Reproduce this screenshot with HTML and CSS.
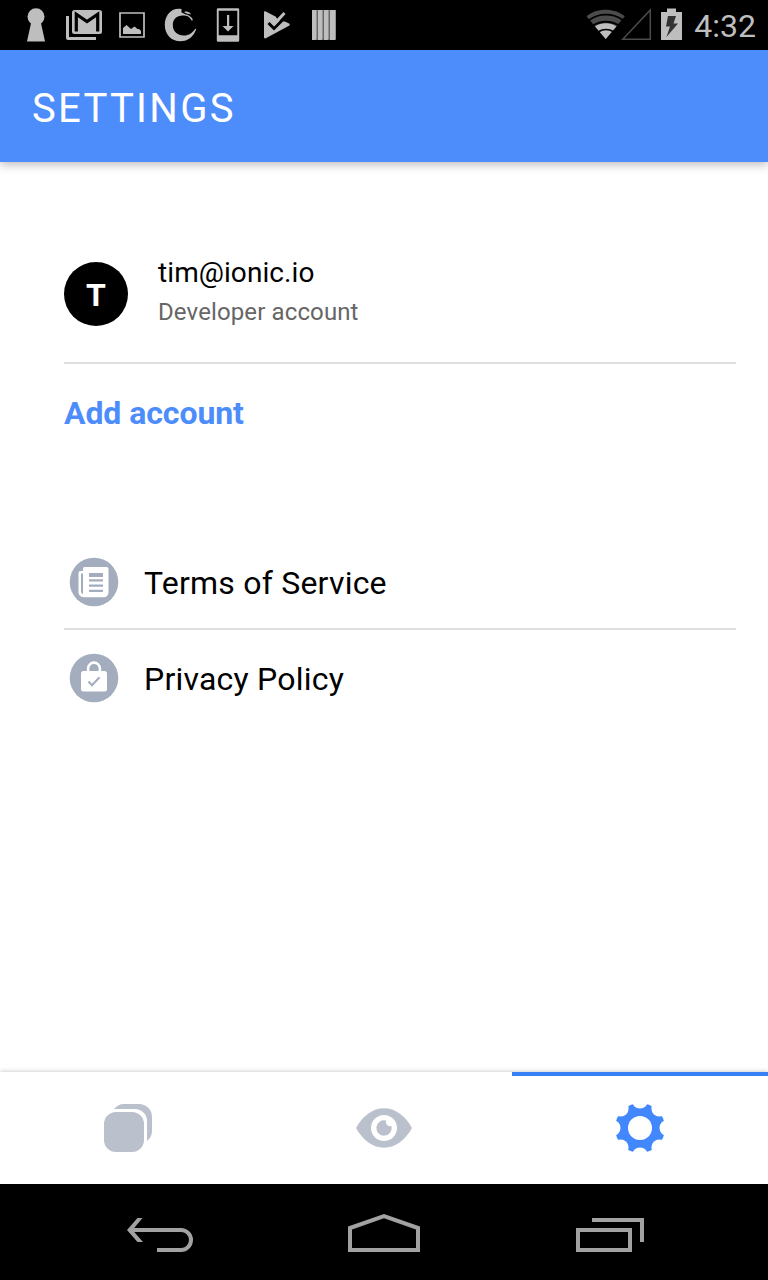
FILE: index.html
```
<!DOCTYPE html>
<html lang="en">

<head>
    <meta charset="UTF-8">
    <meta name="viewport" content="width=device-width, initial-scale=1.0">
    <title>Settings</title>
    <link rel="stylesheet" href="styles.css">
</head>

<body>
    <div class="status-bar">
        <div class="notifications">
            <!-- keyhole -->
            <svg width="48" height="50" viewBox="0 0 48 50"><circle cx="24" cy="16.7" r="8.5"/><path d="M19.500 21h9l4.500 20.500H15z"/></svg>
            <!-- mail -->
            <svg width="48" height="50" viewBox="0 0 48 50">
                <path d="M6 16h3v21h27v3H8a2 2 0 0 1-2-2z"/>
                <rect x="12" y="10" width="30" height="24" rx="2.500"/>
                <path class="cut" d="M16.300 31.500V14.200L27 21.600l10.700-7.400v17.300" stroke-width="3.200"/>
            </svg>
            <!-- picture -->
            <svg width="48" height="50" viewBox="0 0 48 50"><path class="line" d="M12 13h24v24H12z" stroke-width="1.700"/><path d="M15 34v-6l3.500-3 4.500 4 3.500-2.500 3 2.500h1.500l2 2v3z"/></svg>
            <!-- swirl -->
            <svg width="48" height="50" viewBox="0 0 48 50"><path d="M25.500 9C14.500 7.500 8.800 16 8.800 25c0 9.500 6.500 16.300 15.500 16.300 8 0 13.500-5 16-12.300l-1-.3c-3 4-6.300 6.800-11.300 6.800-7 0-11.200-4.500-11.200-10.500S21 15.300 27 15.500c4 0 6.500 1 9 5.500l.8-1.500c-1.500-2.800-3.800-4.500-7-5l-4.300-2z"/><path d="M28 12c2.500-.8 5.500-.5 7 2.500-2.500-.8-5-.5-7-2.500z"/></svg>
            <!-- download to device -->
            <svg width="48" height="50" viewBox="0 0 48 50"><path fill-rule="evenodd" d="M14 8.300h20a1.200 1.200 0 0 1 1.200 1.200v31a1.200 1.200 0 0 1-1.200 1.200H14a1.200 1.200 0 0 1-1.200-1.200v-31A1.200 1.200 0 0 1 14 8.300zM14.700 10.800v24.400h18.600V10.800z"/><path d="M23 15h2.200v11h4.300L24 31.500 18.500 26H23z"/></svg>
            <!-- play check -->
            <svg width="48" height="50" viewBox="0 0 48 50">
                <path d="M12 12.500c0-1 .9-1.500 1.800-1L37 23.600c1 .6 1 1.600 0 2.200L13.800 38.300c-.9.500-1.800 0-1.800-1z"/>
                <path d="M24 17.500l6-7h9v10.500l-6 .5-5-.5z" fill="#000"/>
                <path class="cut" d="M16.500 23l5.500 5.500L33 17.500" stroke-width="3"/>
                <path class="line" d="M18.500 19.800l4 4L32.500 13" stroke-width="3"/>
            </svg>
            <!-- bars -->
            <svg width="48" height="50" viewBox="0 0 48 50"><path fill="#666" d="M12 10h24v30H12z"/><path d="M12 10h4.500v29l-1 1H12zM18 10h4.500v29l-1 1H18zM24 10h4.500v29l-1 1H24zM30 10h5.500v29l-1 1H30z"/></svg>
        </div>
        <div class="system">
            <!-- wifi, signal, battery -->
            <svg width="104" height="50" viewBox="0 0 104 50">
                <path fill="#4b4b4b" d="M19.700 39L0.500 16.200C11 7.600 28 7.600 38.800 16.200z"/>
                <path d="M19.700 39L9 26.500C15.500 22.300 24 22.300 30.400 26.500z"/>
                <path class="cut" d="M3 20.200c10-7.400 24-7.400 34 0M7 25.500c8-5 18-5 26 0M12.500 31.800c4.500-3 10.500-3 15 0" stroke-width="1.800"/>
                <path d="M36.800 39.200L64.300 10v29.200z" fill="none" stroke="#4b4b4b" stroke-width="1.500"/>
                <path d="M75 12h6V8.500h9V12h6v28H75z"/>
                <path fill="#333" d="M82 16h8l-2.500 7.500H92L80.500 37l3.500-10.500h-4z"/>
            </svg>
            <span class="clock">4:32</span>
        </div>
    </div>

    <header class="toolbar">
        <h1 class="title">SETTINGS</h1>
    </header>

    <main class="content">
        <div class="account">
            <div class="avatar">T</div>
            <div class="account-info">
                <h2 class="email">tim@ionic.io</h2>
                <p class="role">Developer account</p>
            </div>
        </div>
        <a class="add-account">Add account</a>

        <div class="links">
            <a class="item">
                <svg width="60" height="60" viewBox="0 0 60 60">
                    <circle cx="30" cy="30" r="24.300" fill="#a3adbd"/>
                    <path fill="#fff" d="M20.500 15h22a2 2 0 0 1 2 2v23.500a4.800 4.800 0 0 1-4.800 4.800H19.500a5 5 0 0 1-5-5V21a2 2 0 0 1 2-2H19v-2.500a1.500 1.500 0 0 1 1.500-1.500z"/>
                    <path fill="#a3adbd" d="M17 21.500h2v20.500q-2-.5-2-2.500zM25 21h14v4H25zM25 27.300h14v2.200H25zM25 32.500h14v2.200H25zM25 37.700h14v2.200H25z"/>
                </svg>
                <span class="label">Terms of Service</span>
            </a>
            <a class="item">
                <svg width="60" height="60" viewBox="0 0 60 60">
                    <circle cx="30" cy="30" r="24.300" fill="#a3adbd"/>
                    <rect x="17" y="23" width="26" height="20.500" rx="2.500" fill="#fff"/>
                    <path fill="none" stroke="#fff" stroke-width="2.600" d="M24.100 24v-3.500a5.900 5.900 0 0 1 11.800 0V24"/>
                    <path fill="none" stroke="#a3adbd" stroke-width="2" d="M24.500 33.500l3.500 3.700 7.500-8"/>
                </svg>
                <span class="label">Privacy Policy</span>
            </a>
        </div>
    </main>

    <nav class="tabs">
        <a class="tab">
            <svg width="56" height="56" viewBox="0 0 56 56">
                <path d="M14 9c3-3.500 6-5 10-5h15a13 13 0 0 1 13 13v14c0 4-1.500 7-5 10V21A12 12 0 0 0 35 9z"/>
                <rect x="4" y="12" width="40" height="40" rx="12"/>
            </svg>
        </a>
        <a class="tab">
            <svg width="56" height="56" viewBox="0 0 56 56">
                <path d="M0 28C7 15.500 17 8.300 28 8.300s21 7.200 28 19.700C49 40.500 39 47.700 28 47.700S7 40.500 0 28z"/>
                <circle cx="28" cy="28" r="13" fill="#fff"/>
                <path d="M30 20.500a7.700 7.700 0 1 0 5.500 5.500 4.400 4.400 0 0 1-5.500-5.500z"/>
            </svg>
        </a>
        <a class="tab active">
            <svg width="56" height="56" viewBox="0 0 56 56">
                <circle cx="28" cy="28" r="25"/>
                <g fill="#fff">
                    <circle cx="28" cy="28" r="12"/>
                    <circle cx="28" cy="0.500" r="8"/>
                    <circle cx="47.400" cy="8.600" r="8"/>
                    <circle cx="55.500" cy="28" r="8"/>
                    <circle cx="47.400" cy="47.400" r="8"/>
                    <circle cx="28" cy="55.500" r="8"/>
                    <circle cx="8.600" cy="47.400" r="8"/>
                    <circle cx="0.500" cy="28" r="8"/>
                    <circle cx="8.600" cy="8.600" r="8"/>
                </g>
            </svg>
        </a>
    </nav>

    <!-- android back / home / recent -->
    <div class="nav-bar">
        <svg width="72" height="48" viewBox="0 0 72 48"><path d="M5 22h52a10 10 0 0 1 0 20H33"/><path d="M18.500 10h-5L3 22l10.500 12h5.500L8.500 22z" fill="#a2a2a2" stroke="none"/></svg>
        <svg width="72" height="48" viewBox="0 0 72 48"><path d="M2 42V20L36 8l34 12v22z"/></svg>
        <svg width="72" height="48" viewBox="0 0 72 48"><path d="M6 22h52v20H6zM20 12h50v22"/></svg>
    </div>
</body>

</html>
```
FILE: styles.css
```
* {
    box-sizing: border-box;
}

body {
    margin: 0;
    height: 1280px;
    display: flex;
    flex-direction: column;
    background-color: #fff;
    color: #000;
    font-family: Roboto, "Liberation Sans", sans-serif;
}

svg {
    display: block;
}

/* status bar */
.status-bar {
    height: 50px;
    padding: 0 12px;
    display: flex;
    justify-content: space-between;
    background-color: #000;
    fill: #bebebe;
}

.notifications,
.system {
    display: flex;
    align-items: center;
}

.cut {
    fill: none;
    stroke: #000;
}

.line {
    fill: none;
    stroke: #bebebe;
}

.clock {
    margin-left: 4px;
    color: #bebebe;
    font-size: 32px;
    line-height: 50px;
    padding-top: 2px;
}

/* toolbar */
.toolbar {
    height: 112px;
    padding: 0 32px;
    display: flex;
    align-items: center;
    background-color: #4d8dfb;
    box-shadow: 0 2px 10px rgba(0, 0, 0, 0.3);
}

.title {
    margin: 4px 0 0;
    color: #fff;
    font-size: 40px;
    font-weight: 400;
    letter-spacing: 2.3px;
}

/* content */
.content {
    flex: 1;
    padding: 82px 32px 0 64px;
}

.account {
    height: 120px;
    display: flex;
    border-bottom: 2px solid #dedede;
}

.avatar {
    width: 64px;
    height: 64px;
    margin: 18px 30px 0 0;
    border-radius: 50%;
    background-color: #000;
    color: #fff;
    font-size: 32px;
    font-weight: 700;
    line-height: 66px;
    text-align: center;
}

.email {
    margin: 10px 0 0;
    font-size: 28px;
    font-weight: 400;
    line-height: 38px;
    letter-spacing: 0.08px;
}

.role {
    margin: 4px 0 0;
    color: #666;
    font-size: 24px;
    line-height: 32px;
    letter-spacing: 0.12px;
}

.add-account {
    display: block;
    color: #4d8dfb;
    font-size: 32px;
    font-weight: 700;
    line-height: 98px;
    letter-spacing: -0.08px;
}

.links {
    margin-top: 72px;
}

.item {
    height: 96px;
    display: flex;
    align-items: center;
    gap: 20px;
    font-size: 32px;
    letter-spacing: 0.22px;
}

.item:first-child {
    padding-top: 2px;
    border-bottom: 2px solid #dedede;
}

.label {
    padding-top: 2px;
}

/* tabs */
.tabs {
    height: 112px;
    display: grid;
    grid-template-columns: repeat(3, 1fr);
    box-shadow: 0 -1px 4px rgba(0, 0, 0, 0.18);
}

.tab {
    display: flex;
    align-items: center;
    justify-content: center;
    background-color: #fff;
    fill: #bac1cc;
}

.active {
    box-shadow: inset 0 4px #3880f5;
    fill: #4387fd;
}

/* navigation buttons */
.nav-bar {
    height: 96px;
    padding: 0 124px;
    display: flex;
    align-items: center;
    justify-content: space-between;
    background-color: #000;
    fill: none;
    stroke: #a2a2a2;
    stroke-width: 4;
}
```
